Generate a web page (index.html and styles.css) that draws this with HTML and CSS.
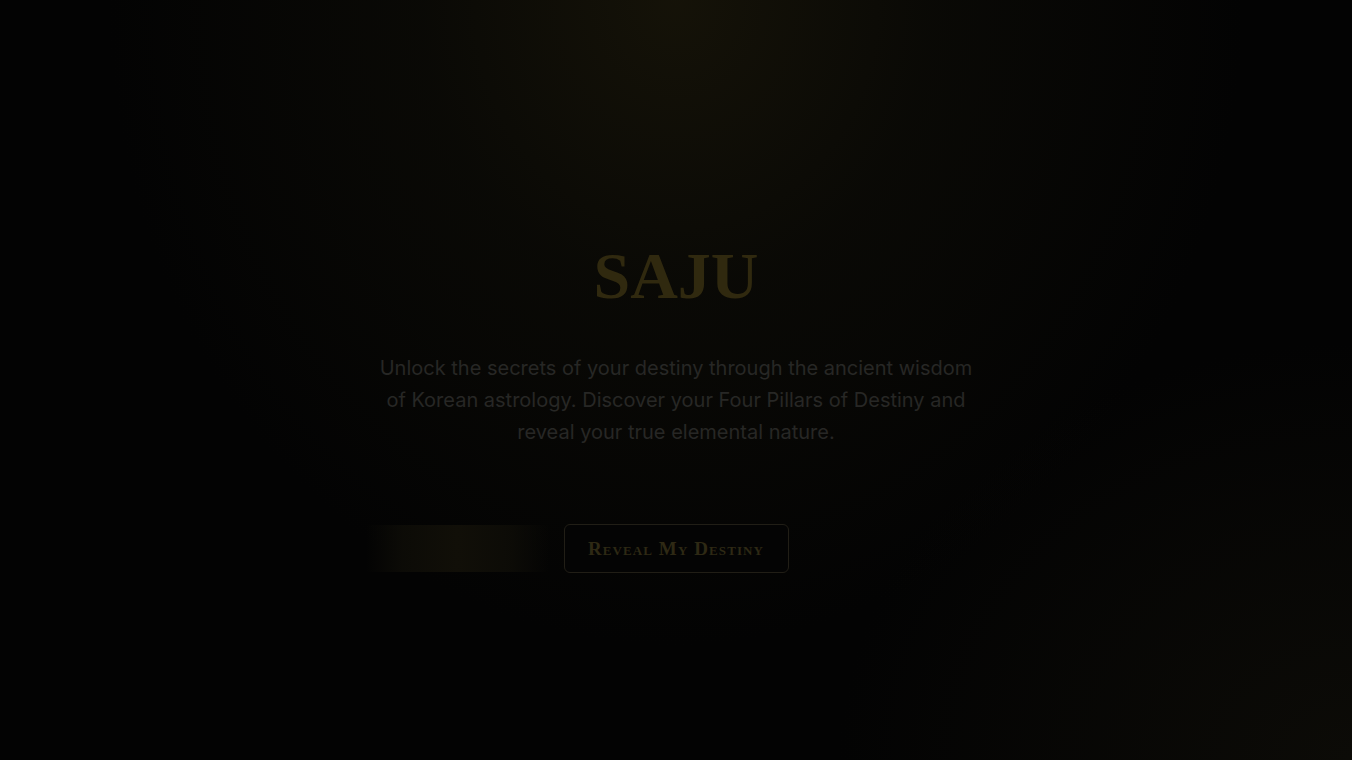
FILE: index.html
```html
<!DOCTYPE html>
<html lang="en">
<head>
<meta charset="utf-8">
<title>Saju</title>
<link rel="stylesheet" href="styles.css">
</head>
<body>
<main class="hero">
  <h1 class="title">SAJU</h1>
  <p class="lead">Unlock the secrets of your destiny through the ancient wisdom of Korean astrology. Discover your Four Pillars of Destiny and reveal your true elemental nature.</p>
  <div class="actions">
    <div class="shimmer"></div>
    <button class="btn-outline">Reveal My Destiny</button>
  </div>
</main>
</body>
</html>
```
FILE: styles.css
```css
html, body {
  margin: 0;
  height: 100%;
}
body {
  background:
    radial-gradient(ellipse 42% 85% at 50% 0%, rgba(24, 21, 9, 0.85) 0%, rgba(14, 13, 7, 0.6) 45%, rgba(5, 5, 4, 0) 100%),
    radial-gradient(ellipse 38% 55% at 100% 100%, rgba(12, 11, 7, 1) 0%, rgba(5, 5, 4, 0) 100%),
    #030303;
  font-family: Inter, "Liberation Sans", sans-serif;
  overflow: hidden;
}
.hero {
  height: 760px;
  display: flex;
  flex-direction: column;
  align-items: center;
  box-sizing: border-box;
  padding-top: 231px;
}
.title {
  margin: 0;
  font-family: "Liberation Serif", "DejaVu Serif", serif;
  font-weight: 700;
  font-size: 66px;
  line-height: 90px;
  letter-spacing: 0;
  color: #30290f;
}
.lead {
  margin: 31px 0 0;
  width: 600px;
  text-align: center;
  font-size: 20px;
  line-height: 32px;
  color: #272725;
}
.actions {
  margin-top: 77px;
  display: flex;
  gap: 15px;
  padding-right: 198px;
}
.shimmer {
  width: 183px;
  height: 47px;
  border-radius: 4px;
  background: linear-gradient(90deg, rgba(10,9,5,0) 0%, rgba(13,12,7,0.9) 20%, rgba(17,15,8,1) 50%, rgba(13,12,7,0.9) 80%, rgba(8,7,4,0) 100%);
}
.btn-outline {
  width: 225px;
  height: 49px;
  margin-top: -1px;
  border: 1px solid #211e16;
  border-radius: 6px;
  background: #040404;
  color: #2e2914;
  font-family: "Liberation Serif", "DejaVu Serif", serif;
  font-variant: small-caps;
  font-weight: 700;
  font-size: 19px;
  letter-spacing: 1.1px;
  cursor: pointer;
}
```
